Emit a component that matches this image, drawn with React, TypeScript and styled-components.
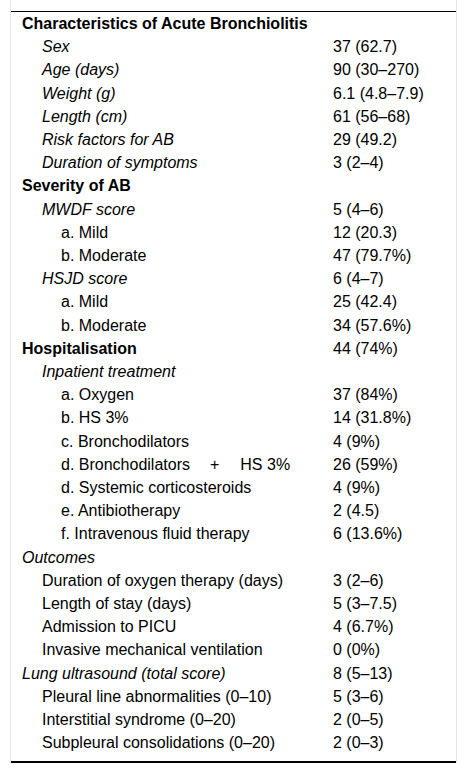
import styled, { createGlobalStyle } from 'styled-components';

const GlobalStyle = createGlobalStyle`
	html, body {
		margin: 0;
		padding: 0;
		background: #fff;
	}
	body {
		font-family: 'Liberation Sans', Arial, sans-serif;
		color: #000;
	}
`;

const Frame = styled.div`
	box-sizing: border-box;
	width: 447px;
	margin-left: 10px;
	padding-top: 11px;
	border-left: 1px solid #e3e3e3;
	border-right: 1px solid #e3e3e3;
`;

const Table = styled.table`
	width: 445px;
	border-collapse: collapse;
	border-top: 1px solid #000;
	border-bottom: 2px solid #000;
	font-size: 16px;

	tr:last-child td {
		padding-bottom: 8px;
	}
`;

const Label = styled.td<{ $level: number; $kind: 'bold' | 'italic' | 'plain' }>`
	width: 322px;
	box-sizing: border-box;
	padding: 2px 0 2px ${({ $level }) => [11, 31, 50][$level]}px;
	line-height: 19.2px;
	white-space: nowrap;
	font-weight: ${({ $kind }) => ($kind === 'bold' ? 700 : 400)};
	font-style: ${({ $kind }) => ($kind === 'italic' ? 'italic' : 'normal')};
`;

const Value = styled.td`
	padding: 2px 0;
	line-height: 19.2px;
	white-space: nowrap;
`;

const Plus = styled.span`
	padding: 0 21px 0 20px;
`;

type Row = {
	label: React.ReactNode;
	level: number;
	kind: 'bold' | 'italic' | 'plain';
	value?: string;
	span?: boolean;
};

const rows: Row[] = [
	{ label: 'Characteristics of Acute Bronchiolitis', level: 0, kind: 'bold', span: true },
	{ label: 'Sex', level: 1, kind: 'italic', value: '37 (62.7)' },
	{ label: 'Age (days)', level: 1, kind: 'italic', value: '90 (30–270)' },
	{ label: 'Weight (g)', level: 1, kind: 'italic', value: '6.1 (4.8–7.9)' },
	{ label: 'Length (cm)', level: 1, kind: 'italic', value: '61 (56–68)' },
	{ label: 'Risk factors for AB', level: 1, kind: 'italic', value: '29 (49.2)' },
	{ label: 'Duration of symptoms', level: 1, kind: 'italic', value: '3 (2–4)' },
	{ label: 'Severity of AB', level: 0, kind: 'bold', value: '' },
	{ label: 'MWDF score', level: 1, kind: 'italic', value: '5 (4–6)' },
	{ label: 'a. Mild', level: 2, kind: 'plain', value: '12 (20.3)' },
	{ label: 'b. Moderate', level: 2, kind: 'plain', value: '47 (79.7%)' },
	{ label: 'HSJD score', level: 1, kind: 'italic', value: '6 (4–7)' },
	{ label: 'a. Mild', level: 2, kind: 'plain', value: '25 (42.4)' },
	{ label: 'b. Moderate', level: 2, kind: 'plain', value: '34 (57.6%)' },
	{ label: 'Hospitalisation', level: 0, kind: 'bold', value: '44 (74%)' },
	{ label: 'Inpatient treatment', level: 1, kind: 'italic', value: '' },
	{ label: 'a. Oxygen', level: 2, kind: 'plain', value: '37 (84%)' },
	{ label: 'b. HS 3%', level: 2, kind: 'plain', value: '14 (31.8%)' },
	{ label: 'c. Bronchodilators', level: 2, kind: 'plain', value: '4 (9%)' },
	{
		label: (
			<>
				d. Bronchodilators<Plus>+</Plus>HS 3%
			</>
		),
		level: 2,
		kind: 'plain',
		value: '26 (59%)',
	},
	{ label: 'd. Systemic corticosteroids', level: 2, kind: 'plain', value: '4 (9%)' },
	{ label: 'e. Antibiotherapy', level: 2, kind: 'plain', value: '2 (4.5)' },
	{ label: 'f. Intravenous fluid therapy', level: 2, kind: 'plain', value: '6 (13.6%)' },
	{ label: 'Outcomes', level: 0, kind: 'italic', value: '' },
	{ label: 'Duration of oxygen therapy (days)', level: 1, kind: 'plain', value: '3 (2–6)' },
	{ label: 'Length of stay (days)', level: 1, kind: 'plain', value: '5 (3–7.5)' },
	{ label: 'Admission to PICU', level: 1, kind: 'plain', value: '4 (6.7%)' },
	{ label: 'Invasive mechanical ventilation', level: 1, kind: 'plain', value: '0 (0%)' },
	{ label: 'Lung ultrasound (total score)', level: 0, kind: 'italic', value: '8 (5–13)' },
	{ label: 'Pleural line abnormalities (0–10)', level: 1, kind: 'plain', value: '5 (3–6)' },
	{ label: 'Interstitial syndrome (0–20)', level: 1, kind: 'plain', value: '2 (0–5)' },
	{ label: 'Subpleural consolidations (0–20)', level: 1, kind: 'plain', value: '2 (0–3)' },
];

export default function App() {
	return (
		<>
			<GlobalStyle />
			<Frame>
				<Table>
					<tbody>
						{rows.map((r, i) =>
							r.span ? (
								<tr key={i}>
									<Label $level={r.level} $kind={r.kind} colSpan={2}>
										{r.label}
									</Label>
								</tr>
							) : (
								<tr key={i}>
									<Label $level={r.level} $kind={r.kind}>
										{r.label}
									</Label>
									<Value>{r.value}</Value>
								</tr>
							)
						)}
					</tbody>
				</Table>
			</Frame>
		</>
	);
}
